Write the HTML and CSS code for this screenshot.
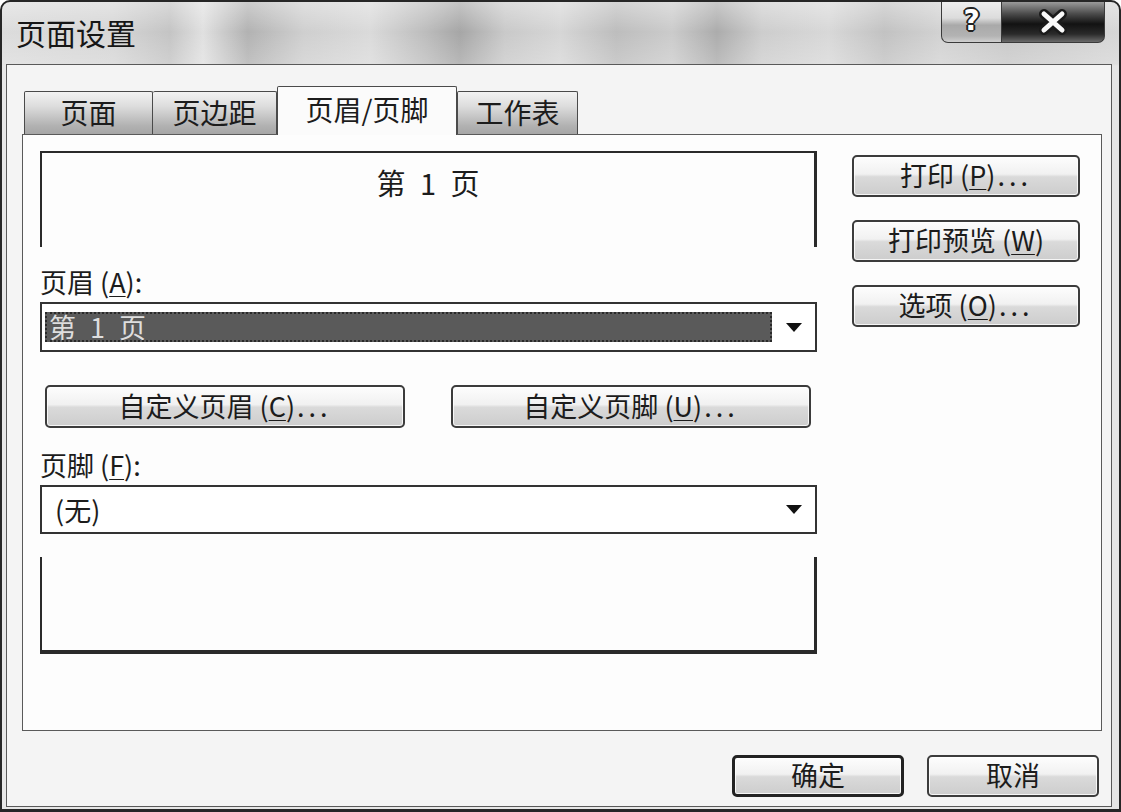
FILE: index.html
```html
<!DOCTYPE html>
<html lang="zh-CN">
<head>
    <meta charset="UTF-8">
    <meta name="viewport" content="width=device-width, initial-scale=1.0">
    <title>页面设置</title>
    <link rel="stylesheet" href="styles.css">
</head>
<body>
    <div class="window">
        <div class="titlebar">
            <span class="title">页面设置</span>
            <div class="caption-btns">
                <div class="cap cap-help">?</div>
                <div class="cap cap-close">
                    <svg width="34" height="26" viewBox="0 0 34 26">
                        <path d="M8 5 L26 21 M26 5 L8 21" stroke="#1b1b1b" stroke-width="10" stroke-linecap="round"/>
                        <path d="M8 5 L26 21 M26 5 L8 21" stroke="#fafafa" stroke-width="5" stroke-linecap="round"/>
                    </svg>
                </div>
            </div>
        </div>

        <div class="client">
            <div class="tabs">
                <div class="tab tab-page">页面</div>
                <div class="tab tab-margin">页边距</div>
                <div class="tab tab-header active">页眉/页脚</div>
                <div class="tab tab-sheet">工作表</div>
            </div>

            <div class="panel">
                <div class="panel-main">
                    <div class="preview preview-top"><span class="page-no">第 1 页</span></div>

                    <div class="label">页眉 (<u>A</u>):</div>
                    <div class="combo">
                        <span class="combo-value selected page-no">第 1 页</span>
                        <span class="combo-arrow"></span>
                    </div>

                    <div class="btn-row">
                        <button class="btn btn-wide">自定义页眉 (<u>C</u>)<span class="dots">...</span></button>
                        <button class="btn btn-wide">自定义页脚 (<u>U</u>)<span class="dots">...</span></button>
                    </div>

                    <div class="label label-footer">页脚 (<u>F</u>):</div>
                    <div class="combo combo-footer">
                        <span class="combo-value">(无)</span>
                        <span class="combo-arrow"></span>
                    </div>

                    <div class="preview preview-bottom"></div>
                </div>

                <div class="panel-side">
                    <button class="btn btn-side">打印 (<u>P</u>)<span class="dots">...</span></button>
                    <button class="btn btn-side">打印预览 (<u>W</u>)</button>
                    <button class="btn btn-side">选项 (<u>O</u>)<span class="dots">...</span></button>
                </div>
            </div>

            <div class="dialog-footer">
                <button class="btn btn-ok">确定</button>
                <button class="btn btn-cancel">取消</button>
            </div>
        </div>
    </div>
</body>
</html>
```

FILE: styles.css
```css
* {
    box-sizing: border-box;
}
body {
    margin: 0;
    background: #ffffff;
    font-family: "Noto Sans CJK SC", "Liberation Sans", sans-serif;
    color: #1c1c1c;
}

/* window frame + aero title bar */
.window {
    width: 1121px;
    height: 812px;
    border: 2px solid #262626;
    border-bottom-width: 3px;
    border-radius: 10px 10px 0 0;
    padding: 0 7px 2px 4px;
    display: flex;
    flex-direction: column;
    overflow: hidden;
    background:
        linear-gradient(180deg, rgba(255,255,255,0.35) 0px, rgba(255,255,255,0) 30px, rgba(255,255,255,0.2) 62px, rgba(230,230,230,1) 64px),
        linear-gradient(90deg, #dcdcdc 0%, #d6d6d6 10%, #c4c4c4 15%, #e0e0e0 18%, #b2b2b2 22%, #cfcfcf 27%, #dadada 33%, #bcbcbc 38%, #a6a6a6 41%, #c9c9c9 45%, #d6d6d6 50%, #bdbdbd 55%, #cbcbcb 60%, #acacac 64%, #cdcdcd 68%, #d8d8d8 74%, #c2c2c2 79%, #d2d2d2 84%, #c8c8c8 90%, #d6d6d6 100%);
}
.titlebar {
    height: 62px;
    display: flex;
    justify-content: space-between;
    align-items: flex-start;
    flex-shrink: 0;
}
.title {
    font-size: 30px;
    line-height: 34px;
    padding-left: 10px;
    margin-top: 13px;
    color: #161616;
}
.caption-btns {
    display: flex;
    margin-right: 7px;
}
.cap {
    height: 41px;
    border: 1px solid #3a3a3a;
    border-top: none;
    display: flex;
    align-items: center;
    justify-content: center;
}
.cap-help {
    width: 61px;
    border-radius: 0 0 0 7px;
    background: linear-gradient(180deg, #eeeeee 0%, #dcdcdc 40%, #a9a9a9 58%, #b3b3b3 85%, #cfcfcf 100%);
    font-family: "DejaVu Sans", sans-serif;
    font-weight: bold;
    font-size: 28px;
    color: #ffffff;
    text-shadow: -1px -1px 0 #222, 1px -1px 0 #222, -1px 1px 0 #222, 1px 1px 0 #222, 0 2px 0 #222, 2px 0 0 #222, -2px 0 0 #222, 0 -2px 0 #222;
    padding-bottom: 4px;
}
.cap-close {
    width: 103px;
    border-left: none;
    border-radius: 0 0 7px 0;
    background: linear-gradient(180deg, #9a9a9a 0%, #4a4a4a 30%, #121212 55%, #2a2a2a 80%, #6a6a6a 100%);
}

/* client area */
.client {
    flex: 1;
    border: 1px solid #595959;
    background: #f4f4f4;
    padding: 21px 9px 0 15px;
    display: flex;
    flex-direction: column;
}

.tabs {
    display: flex;
    align-items: flex-end;
    height: 49px;
    padding-left: 2px;
    margin-bottom: -1px;
    position: relative;
    z-index: 1;
}
.tab {
    height: 43px;
    margin-bottom: 1px;
    border: 1px solid #4a4a4a;
    border-bottom: none;
    border-radius: 2px 2px 0 0;
    font-size: 28px;
    line-height: 40px;
    text-align: center;
    background: linear-gradient(180deg, #f2f2f2 0%, #dcdcdc 35%, #b2b2b2 80%, #a6a6a6 100%);
}
.tab + .tab {
    border-left: none;
}
.tab-page { width: 129px; }
.tab-margin { width: 124px; }
.tab-header { width: 180px; }
.tab-sheet { width: 121px; border-left: 1px solid #4a4a4a !important; }
.tab.active {
    height: 49px;
    margin-bottom: 0;
    border-left: 1px solid #4a4a4a;
    background: #fbfbfb;
    line-height: 44px;
}

.panel {
    height: 597px;
    border: 1px solid #5a5a5a;
    background: #fdfdfd;
    padding: 16px 0 0 17px;
    display: flex;
    gap: 35px;
}
.panel-main {
    width: 777px;
    display: flex;
    flex-direction: column;
}

.preview {
    border-color: #2a2a2a;
    border-style: solid;
}
.preview-top {
    height: 96px;
    border-width: 2px 3px 0 2px;
    text-align: center;
    padding-top: 13px;
    font-size: 29px;
    line-height: 32px;
}
.preview-bottom {
    height: 97px;
    margin-top: 23px;
    border-width: 0 3px 4px 2px;
}
.page-no {
    word-spacing: 8px;
}

.label {
    margin-top: 20px;
    font-size: 27px;
    line-height: 30px;
}
.label-footer {
    margin-top: 22px;
}
u {
    text-decoration-thickness: 1px;
    text-underline-offset: 3px;
}
.dots {
    letter-spacing: 4px;
    margin-left: 2px;
}

.combo {
    margin-top: 5px;
    height: 50px;
    border: 2px solid #333333;
    background: #ffffff;
    display: flex;
    align-items: center;
    padding-left: 3px;
}
.combo-footer {
    height: 49px;
    padding-left: 13px;
}
.combo-value {
    font-size: 27px;
    line-height: 30px;
}
.combo-value.selected {
    width: 727px;
    height: 30px;
    background: #5a5a5a;
    outline: 2px dotted #2a2a2a;
    outline-offset: -2px;
    color: #dedede;
    padding-left: 4px;
    line-height: 29px;
}
.combo-arrow {
    margin-left: auto;
    margin-right: 13px;
    width: 0;
    height: 0;
    border-left: 8px solid transparent;
    border-right: 8px solid transparent;
    border-top: 9px solid #111111;
}

/* buttons */
.btn {
    font-family: "Noto Sans CJK SC", "Liberation Sans", sans-serif;
    font-size: 27px;
    line-height: 1;
    color: #1c1c1c;
    border: 2px solid #3c3c3c;
    border-radius: 5px;
    background: linear-gradient(180deg, #fdfdfd 0%, #f1f1f1 45%, #dadada 52%, #cdcdcd 100%);
    box-shadow: inset 0 0 0 1px rgba(255,255,255,0.8);
    padding: 0 0 3px;
}
.btn-row {
    margin-top: 33px;
    padding-left: 5px;
    display: flex;
    gap: 46px;
}
.btn-wide {
    width: 360px;
    height: 43px;
}
.panel-side {
    width: 228px;
    padding-top: 4px;
    display: flex;
    flex-direction: column;
    gap: 23px;
}
.btn-side {
    height: 42px;
}

.dialog-footer {
    display: flex;
    justify-content: flex-end;
    gap: 23px;
    padding: 24px 3px 0 0;
}
.btn-ok,
.btn-cancel {
    width: 172px;
    height: 42px;
}
.btn-ok {
    border: 3px solid #222222;
}
```
